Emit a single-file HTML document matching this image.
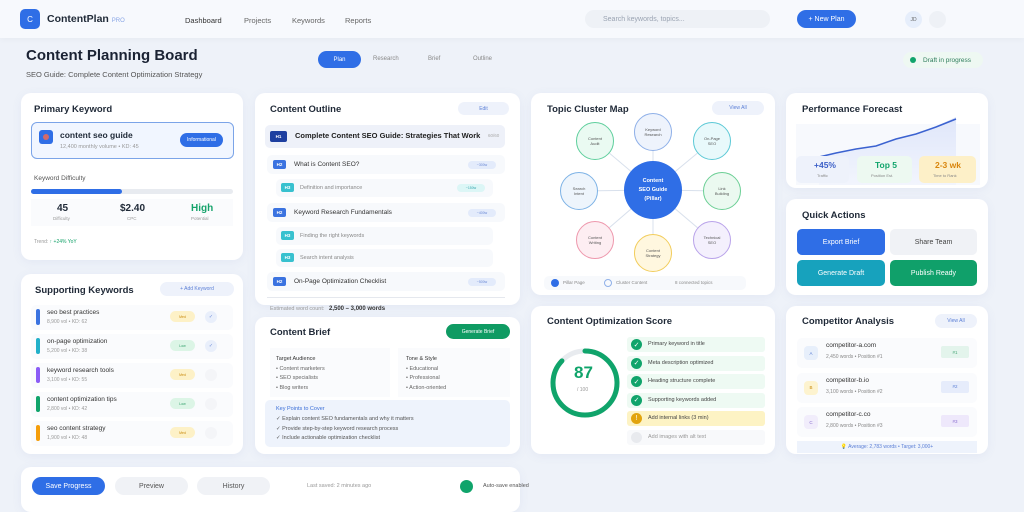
<!DOCTYPE html>
<html><head><meta charset="utf-8">
<style>
*{box-sizing:border-box;margin:0;padding:0}
body{width:1024px;height:500px;overflow:hidden;background:#eef2f9;font-family:"Liberation Sans",sans-serif;color:#1f2937;position:relative}
.a{position:absolute}
.card{position:absolute;background:#fff;border-radius:10px;box-shadow:0 2px 10px rgba(100,120,180,.08)}
.t{position:absolute;font-size:9.5px;font-weight:bold;color:#1f2937;white-space:nowrap}
.s{position:absolute;white-space:nowrap}
.pill{position:absolute;border-radius:9px;white-space:nowrap;display:flex;align-items:center;justify-content:center}
.row{position:absolute;background:#f7f9fc;border-radius:5px}
.hb{position:absolute;width:13px;height:9px;border-radius:2px;color:#fff;font-size:4.5px;font-weight:bold;display:flex;align-items:center;justify-content:center}
.circ{position:absolute;border-radius:50%;border:1.5px solid;text-align:center;font-size:4px;display:flex;align-items:center;justify-content:center;color:#555}
.chk{position:absolute;width:11px;height:11px;border-radius:50%;background:#10a46b;color:#fff;font-size:7px;display:flex;align-items:center;justify-content:center}
.btn{position:absolute;border-radius:5px;font-size:7px;display:flex;align-items:center;justify-content:center}
</style></head><body>
<div class="a" style="left:0;top:0;width:1024px;height:38px;background:#f7f9fd;box-shadow:0 2px 6px rgba(0,0,0,.03)"></div>
<div class="btn" style="left:20px;top:9px;width:20px;height:20px;background:#2f6ee6;color:#fff;font-size:8px">C</div>
<div class="s" style="left:47px;top:13px;font-size:10.5px;font-weight:bold;color:#1f2937">ContentPlan <span style="font-size:6px;color:#8aa6e6;font-weight:normal">PRO</span></div>
<div class="s" style="left:185px;top:16px;font-size:7.5px;color:#333">Dashboard</div>
<div class="s" style="left:244px;top:16px;font-size:7.5px;color:#666">Projects</div>
<div class="s" style="left:292px;top:16px;font-size:7.5px;color:#666">Keywords</div>
<div class="s" style="left:345px;top:16px;font-size:7.5px;color:#666">Reports</div>
<div class="pill" style="left:585px;top:10px;width:185px;height:18px;background:#eef1f6;font-size:7px;color:#9aa3b2;justify-content:flex-start;padding-left:18px">Search keywords, topics...</div>
<div class="pill" style="left:797px;top:10px;width:59px;height:18px;background:#2f6ee6;color:#fff;font-size:7px">+ New Plan</div>
<div class="pill" style="left:905px;top:11px;width:17px;height:17px;border-radius:50%;background:#e6eefb;font-size:5px;color:#666">JD</div>
<div class="a" style="left:929px;top:11px;width:17px;height:17px;border-radius:50%;background:#eef1f6"></div>

<div class="s" style="left:26px;top:47px;font-size:15px;font-weight:bold;color:#1a2233">Content Planning Board</div>
<div class="s" style="left:26px;top:70px;font-size:7.5px;color:#555">SEO Guide: Complete Content Optimization Strategy</div>
<div class="pill" style="left:318px;top:51px;width:43px;height:17px;background:#2f6ee6;color:#fff;font-size:6px">Plan</div>
<div class="s" style="left:373px;top:56px;font-size:6px;color:#888">Research</div>
<div class="s" style="left:428px;top:56px;font-size:6px;color:#888">Brief</div>
<div class="s" style="left:473px;top:56px;font-size:6px;color:#888">Outline</div>
<div class="pill" style="left:903px;top:52px;width:80px;height:16px;background:#eef8f2;font-size:6.5px;color:#2e7d5b;justify-content:flex-start;padding-left:20px">Draft in progress</div>
<div class="a" style="left:910px;top:57px;width:6px;height:6px;border-radius:50%;background:#10a46b"></div>

<div class="card" style="left:21px;top:93px;width:222px;height:167px"></div>
<div class="t" style="left:34px;top:104px">Primary Keyword</div>
<div class="a" style="left:31px;top:122px;width:203px;height:37px;border:1px solid #7ba4e8;border-radius:6px;background:#f1f6ff"></div>
<div class="a" style="left:39px;top:130px;width:14px;height:14px;border-radius:3px;background:#2f6ee6"></div>
<div class="a" style="left:43px;top:134px;width:6px;height:6px;border-radius:50%;background:#d26a6a"></div>
<div class="s" style="left:60px;top:130px;font-size:8.5px;font-weight:bold">content seo guide</div>
<div class="s" style="left:60px;top:144px;font-size:5.5px;color:#999">12,400 monthly volume • KD: 45</div>
<div class="pill" style="left:180px;top:133px;width:43px;height:14px;background:#2f6ee6;color:#fff;font-size:5px">Informational</div>
<div class="s" style="left:34px;top:175px;font-size:6.5px;color:#555">Keyword Difficulty</div>
<div class="a" style="left:31px;top:189px;width:202px;height:5px;border-radius:3px;background:#e8ebf0"></div>
<div class="a" style="left:31px;top:189px;width:91px;height:5px;border-radius:3px;background:#2f6ee6"></div>
<div class="a" style="left:31px;top:199px;width:202px;height:27px;background:#fafbfd"></div>
<div class="s" style="left:57px;top:203px;font-size:10px;font-weight:bold">45</div>
<div class="s" style="left:53px;top:216px;font-size:4.5px;color:#999">Difficulty</div>
<div class="s" style="left:120px;top:203px;font-size:10px;font-weight:bold">$2.40</div>
<div class="s" style="left:127px;top:216px;font-size:4.5px;color:#999">CPC</div>
<div class="s" style="left:191px;top:203px;font-size:10px;font-weight:bold;color:#16a36b">High</div>
<div class="s" style="left:191px;top:216px;font-size:4.5px;color:#999">Potential</div>
<div class="s" style="left:34px;top:239px;font-size:5px;color:#999">Trend: <span style="color:#16a36b">↑ +24% YoY</span></div>

<div class="card" style="left:21px;top:274px;width:222px;height:180px"></div>
<div class="t" style="left:35px;top:285px">Supporting Keywords</div>
<div class="pill" style="left:160px;top:282px;width:74px;height:14px;background:#eef2fb;color:#5b7fd6;font-size:5px">+ Add Keyword</div>
<div id="sk"></div>

<div class="card" style="left:255px;top:93px;width:265px;height:212px"></div>
<div class="t" style="left:270px;top:104px">Content Outline</div>
<div class="pill" style="left:458px;top:102px;width:51px;height:13px;background:#eef2fb;color:#5b7fd6;font-size:5px">Edit</div>
<div class="row" style="left:265px;top:125px;width:240px;height:23px;background:#eef1f9"></div>
<div class="hb" style="left:270px;top:131px;width:17px;height:11px;background:#1e3fa0">H1</div>
<div class="s" style="left:295px;top:131px;font-size:7.5px;font-weight:bold;color:#222">Complete Content SEO Guide: Strategies That Work</div>
<div class="s" style="left:488px;top:133px;font-size:4.5px;color:#aaa">60/60</div>

<div class="row" style="left:267px;top:155px;width:238px;height:19px"></div>
<div class="hb" style="left:273px;top:160px;background:#3b73e0">H2</div>
<div class="s" style="left:294px;top:161px;font-size:6.5px;color:#333">What is Content SEO?</div>
<div class="pill" style="left:468px;top:161px;width:28px;height:8px;background:#e3ebfb;font-size:3.5px;color:#6c8ad6">~300w</div>
<div class="row" style="left:276px;top:179px;width:217px;height:18px"></div>
<div class="hb" style="left:281px;top:183px;background:#38c1cf">H3</div>
<div class="s" style="left:300px;top:185px;font-size:5.5px;color:#888">Definition and importance</div>
<div class="pill" style="left:457px;top:184px;width:28px;height:8px;background:#dcf6f6;font-size:3.5px;color:#38a6b0">~150w</div>

<div class="row" style="left:267px;top:203px;width:238px;height:19px"></div>
<div class="hb" style="left:273px;top:208px;background:#3b73e0">H2</div>
<div class="s" style="left:294px;top:209px;font-size:6.5px;color:#333">Keyword Research Fundamentals</div>
<div class="pill" style="left:468px;top:209px;width:28px;height:8px;background:#e3ebfb;font-size:3.5px;color:#6c8ad6">~400w</div>
<div class="row" style="left:276px;top:227px;width:217px;height:18px"></div>
<div class="hb" style="left:281px;top:231px;background:#38c1cf">H3</div>
<div class="s" style="left:300px;top:233px;font-size:5.5px;color:#888">Finding the right keywords</div>
<div class="row" style="left:276px;top:249px;width:217px;height:18px"></div>
<div class="hb" style="left:281px;top:253px;background:#38c1cf">H3</div>
<div class="s" style="left:300px;top:255px;font-size:5.5px;color:#888">Search intent analysis</div>
<div class="row" style="left:267px;top:272px;width:238px;height:19px"></div>
<div class="hb" style="left:273px;top:277px;background:#3b73e0">H2</div>
<div class="s" style="left:294px;top:278px;font-size:6.5px;color:#333">On-Page Optimization Checklist</div>
<div class="pill" style="left:468px;top:278px;width:28px;height:8px;background:#e3ebfb;font-size:3.5px;color:#6c8ad6">~500w</div>
<div class="a" style="left:267px;top:297px;width:238px;height:1px;background:#e5e8ee"></div>
<div class="s" style="left:270px;top:306px;font-size:5.5px;color:#999">Estimated word count: &nbsp; <b style="color:#333;font-size:6px">2,500 – 3,000 words</b></div>

<div class="card" style="left:255px;top:317px;width:265px;height:137px"></div>
<div class="t" style="left:270px;top:327px">Content Brief</div>
<div class="pill" style="left:446px;top:324px;width:64px;height:15px;background:#0f9b63;color:#fff;font-size:5px">Generate Brief</div>
<div class="a" style="left:270px;top:348px;width:120px;height:49px;background:#fafbfd"></div>
<div class="a" style="left:398px;top:348px;width:112px;height:49px;background:#fafbfd"></div>
<div class="s" style="left:276px;top:355px;font-size:5.5px;color:#333;line-height:9.5px">Target Audience<br><span style="color:#666">• Content marketers<br>• SEO specialists<br>• Blog writers</span></div>
<div class="s" style="left:406px;top:355px;font-size:5.5px;color:#333;line-height:9.5px">Tone &amp; Style<br><span style="color:#666">• Educational<br>• Professional<br>• Action-oriented</span></div>
<div class="a" style="left:265px;top:400px;width:245px;height:47px;border-radius:5px;background:#eef3fc"></div>
<div class="s" style="left:276px;top:405px;font-size:5.5px;color:#3b6fd8;line-height:9.8px">Key Points to Cover<br><span style="color:#555">✓ Explain content SEO fundamentals and why it matters<br>✓ Provide step-by-step keyword research process<br>✓ Include actionable optimization checklist</span></div>

<div class="card" style="left:531px;top:93px;width:244px;height:202px"></div>
<div class="t" style="left:547px;top:104px">Topic Cluster Map</div>
<div class="pill" style="left:712px;top:101px;width:52px;height:14px;background:#eef2fb;color:#5b7fd6;font-size:5px">View All</div>
<svg class="a" style="left:531px;top:93px" width="244" height="202">
<g stroke="#d8e0ec" stroke-width="1">
<line x1="122" y1="97" x2="64" y2="48"/><line x1="122" y1="97" x2="122" y2="39"/><line x1="122" y1="97" x2="181" y2="48"/>
<line x1="122" y1="97" x2="48" y2="98"/><line x1="122" y1="97" x2="191" y2="98"/><line x1="122" y1="97" x2="64" y2="147"/>
<line x1="122" y1="97" x2="122" y2="160"/><line x1="122" y1="97" x2="181" y2="147"/></g></svg>
<div class="circ" style="left:576px;top:122px;width:38px;height:38px;border-color:#5fcf9d;background:#eafaf2">Content<br>Audit</div>
<div class="circ" style="left:634px;top:113px;width:38px;height:38px;border-color:#8fb0e8;background:#eef3fc">Keyword<br>Research</div>
<div class="circ" style="left:693px;top:122px;width:38px;height:38px;border-color:#5cc9d6;background:#e8f9fb">On-Page<br>SEO</div>
<div class="circ" style="left:560px;top:172px;width:38px;height:38px;border-color:#7eb3e6;background:#eef5fc">Search<br>Intent</div>
<div class="circ" style="left:703px;top:172px;width:38px;height:38px;border-color:#6ccf95;background:#ebf9f0">Link<br>Building</div>
<div class="circ" style="left:576px;top:221px;width:38px;height:38px;border-color:#ee98ad;background:#fdeef2">Content<br>Writing</div>
<div class="circ" style="left:634px;top:234px;width:38px;height:38px;border-color:#f2cd5c;background:#fff7df">Content<br>Strategy</div>
<div class="circ" style="left:693px;top:221px;width:38px;height:38px;border-color:#b9a3ea;background:#f4f0fd">Technical<br>SEO</div>
<div class="a" style="left:624px;top:161px;width:58px;height:58px;border-radius:50%;background:#2f6ee6;color:#fff;font-size:5.5px;font-weight:bold;text-align:center;display:flex;align-items:center;justify-content:center;line-height:9px">Content<br>SEO Guide<br>(Pillar)</div>
<div class="a" style="left:544px;top:276px;width:202px;height:14px;border-radius:5px;background:#f7f9fc"></div>
<div class="a" style="left:551px;top:279px;width:8px;height:8px;border-radius:50%;background:#2f6ee6"></div>
<div class="s" style="left:563px;top:280px;font-size:4.5px;color:#888">Pillar Page</div>
<div class="a" style="left:604px;top:279px;width:8px;height:8px;border-radius:50%;border:1px solid #8fb0e8"></div>
<div class="s" style="left:616px;top:280px;font-size:4.5px;color:#888">Cluster Content</div>
<div class="s" style="left:675px;top:280px;font-size:4.5px;color:#888">8 connected topics</div>

<div class="card" style="left:531px;top:306px;width:244px;height:148px"></div>
<div class="t" style="left:547px;top:316px">Content Optimization Score</div>
<svg class="a" style="left:547px;top:345px" width="76" height="76"><circle cx="38" cy="38" r="32" fill="none" stroke="#e8ebef" stroke-width="5"/><circle cx="38" cy="38" r="32" fill="none" stroke="#10a46b" stroke-width="5" stroke-dasharray="175 201" transform="rotate(-90 38 38)" stroke-linecap="round"/></svg>
<div class="s" style="left:574px;top:363px;font-size:17px;font-weight:bold;color:#10a46b">87</div>
<div class="s" style="left:577px;top:387px;font-size:5px;color:#999">/ 100</div>
<div id="oc"></div>

<div class="card" style="left:786px;top:93px;width:202px;height:95px"></div>
<div class="t" style="left:802px;top:104px">Performance Forecast</div>
<svg class="a" style="left:796px;top:117px" width="184" height="68"><defs><linearGradient id="g" x1="0" y1="0" x2="0" y2="1"><stop offset="0" stop-color="#dfe6fa"/><stop offset="1" stop-color="#f2f5fd"/></linearGradient></defs><rect x="0" y="7" width="184" height="61" fill="#f7f9fd"/><path d="M23 40 L60 32 L80 29 L100 22 L130 14 L160 0 L160 68 L23 68Z" fill="url(#g)"/><path d="M23 40 L40 36 L60 32 L80 29 L100 22 L120 17 L140 10 L160 2" fill="none" stroke="#3b62d0" stroke-width="1.5"/></svg>
<div class="a" style="left:796px;top:156px;width:53px;height:27px;border-radius:5px;background:#eef2fb"></div>
<div class="a" style="left:857px;top:156px;width:55px;height:27px;border-radius:5px;background:#edf9f1"></div>
<div class="a" style="left:919px;top:156px;width:57px;height:27px;border-radius:5px;background:#fdf0c8"></div>
<div class="s" style="left:814px;top:160px;font-size:8.5px;font-weight:bold;color:#3b5fc8">+45%</div>
<div class="s" style="left:817px;top:173px;font-size:4px;color:#888">Traffic</div>
<div class="s" style="left:875px;top:160px;font-size:8.5px;font-weight:bold;color:#10a46b">Top 5</div>
<div class="s" style="left:871px;top:173px;font-size:4px;color:#888">Position Est.</div>
<div class="s" style="left:935px;top:160px;font-size:8.5px;font-weight:bold;color:#d9860e">2-3 wk</div>
<div class="s" style="left:933px;top:173px;font-size:4px;color:#888">Time to Rank</div>

<div class="card" style="left:786px;top:199px;width:202px;height:96px"></div>
<div class="t" style="left:802px;top:210px">Quick Actions</div>
<div class="btn" style="left:797px;top:229px;width:88px;height:26px;background:#2f6ee6;color:#fff">Export Brief</div>
<div class="btn" style="left:890px;top:229px;width:87px;height:26px;background:#f0f2f6;color:#444">Share Team</div>
<div class="btn" style="left:797px;top:260px;width:88px;height:26px;background:#17a2bd;color:#fff">Generate Draft</div>
<div class="btn" style="left:890px;top:260px;width:87px;height:26px;background:#10a06a;color:#fff">Publish Ready</div>

<div class="card" style="left:786px;top:306px;width:202px;height:148px"></div>
<div class="t" style="left:802px;top:316px">Competitor Analysis</div>
<div class="pill" style="left:935px;top:314px;width:42px;height:14px;background:#eef2fb;color:#5b7fd6;font-size:5px">View All</div>
<div id="cp"></div>
<div class="btn" style="left:797px;top:441px;width:180px;height:12px;border-radius:0;background:#eef3fc;font-size:5px;color:#5b7fd6">💡 Average: 2,783 words • Target: 3,000+</div>

<div class="card" style="left:21px;top:467px;width:499px;height:45px"></div>
<div class="pill" style="left:32px;top:477px;width:73px;height:18px;background:#2f6ee6;color:#fff;font-size:7px">Save Progress</div>
<div class="pill" style="left:115px;top:477px;width:73px;height:18px;background:#f0f2f6;color:#555;font-size:7px">Preview</div>
<div class="pill" style="left:197px;top:477px;width:73px;height:18px;background:#f0f2f6;color:#555;font-size:7px">History</div>
<div class="s" style="left:307px;top:483px;font-size:5.5px;color:#999">Last saved: 2 minutes ago</div>
<div class="a" style="left:460px;top:480px;width:13px;height:13px;border-radius:50%;background:#10a46b"></div>
<div class="s" style="left:483px;top:483px;font-size:5.5px;color:#555">Auto-save enabled</div>

<script>
var sk=[["seo best practices","8,900 vol • KD: 62","#3b73e0","Med",1],["on-page optimization","5,200 vol • KD: 38","#22b0c9","Low",1],["keyword research tools","3,100 vol • KD: 55","#8b5cf6","Med",0],["content optimization tips","2,800 vol • KD: 42","#10a46b","Low",0],["seo content strategy","1,900 vol • KD: 48","#f59e0b","Med",0]];
var h="";sk.forEach(function(k,i){var y=305+i*29;
h+='<div class="row" style="left:31px;top:'+y+'px;width:202px;height:25px;background:#fafbfd"></div>';
h+='<div class="a" style="left:36px;top:'+(y+4)+'px;width:4px;height:16px;border-radius:2px;background:'+k[2]+'"></div>';
h+='<div class="s" style="left:47px;top:'+(y+4)+'px;font-size:6.5px;color:#333">'+k[0]+'</div>';
h+='<div class="s" style="left:47px;top:'+(y+14)+'px;font-size:5px;color:#999">'+k[1]+'</div>';
var lo=k[3]=="Low";h+='<div class="pill" style="left:170px;top:'+(y+6)+'px;width:25px;height:11px;background:'+(lo?'#dcf5e6':'#fdf1c7')+';color:'+(lo?'#2e9d67':'#c98a0c')+';font-size:3.5px">'+k[3]+'</div>';
h+='<div class="pill" style="left:205px;top:'+(y+6)+'px;width:12px;height:12px;border-radius:50%;background:'+(k[4]?'#e9effb':'#f4f5f8')+';color:#6c8ad6;font-size:5px">'+(k[4]?'✓':'')+'</div>';});
document.getElementById('sk').outerHTML=h;
var oc=[["Primary keyword in title",0],["Meta description optimized",0],["Heading structure complete",0],["Supporting keywords added",0],["Add internal links (3 min)",1],["Add images with alt text",2]];
h="";oc.forEach(function(o,i){var y=337+i*18.5;var bg=o[1]==0?'#eefaf3':o[1]==1?'#fdf3c4':'#f8f9fb';
h+='<div class="a" style="left:627px;top:'+y+'px;width:138px;height:15px;border-radius:3px;background:'+bg+'"></div>';
var cb=o[1]==0?'#10a46b':o[1]==1?'#e2a40d':'#e8eaee';
h+='<div class="chk" style="left:631px;top:'+(y+2)+'px;background:'+cb+'">'+(o[1]==0?'✓':o[1]==1?'!':'')+'</div>';
h+='<div class="s" style="left:648px;top:'+(y+4)+'px;font-size:5.5px;color:'+(o[1]==2?'#999':'#444')+'">'+o[0]+'</div>';});
document.getElementById('oc').outerHTML=h;
var cp=[["A","competitor-a.com","2,450 words • Position #1","#e7effb","#5b7fd6","#1","#e3f4ec","#4aa87a"],["B","competitor-b.io","3,100 words • Position #2","#fdf3cf","#c98a0c","#2","#e6ecfb","#5b7fd6"],["C","competitor-c.co","2,800 words • Position #3","#f1edfb","#8a6fd0","#3","#eee8fb","#8a6fd0"]];
h="";cp.forEach(function(c,i){var y=338+i*34.5;
h+='<div class="row" style="left:797px;top:'+y+'px;width:180px;height:30px;background:#fafbfd"></div>';
h+='<div class="btn" style="left:804px;top:'+(y+8)+'px;width:14px;height:14px;border-radius:4px;background:'+c[3]+';color:'+c[4]+';font-size:4.5px">'+c[0]+'</div>';
h+='<div class="s" style="left:826px;top:'+(y+4)+'px;font-size:6.5px;color:#333">'+c[1]+'</div>';
h+='<div class="s" style="left:826px;top:'+(y+16)+'px;font-size:5px;color:#888">'+c[2]+'</div>';
h+='<div class="btn" style="left:941px;top:'+(y+8)+'px;width:28px;height:12px;border-radius:2px;background:'+c[6]+';color:'+c[7]+';font-size:4.5px">'+c[5]+'</div>';});
document.getElementById('cp').outerHTML=h;
</script>
</body></html>
